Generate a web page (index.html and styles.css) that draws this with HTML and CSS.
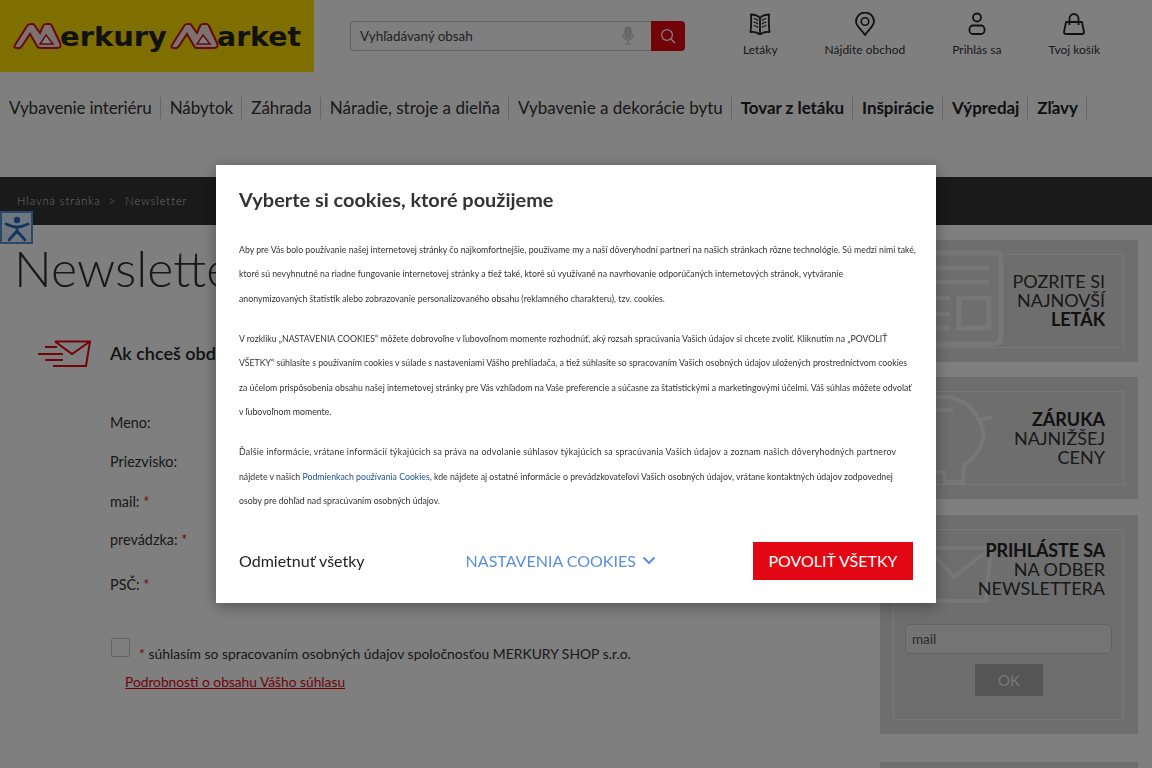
FILE: index.html
```html
<!DOCTYPE html>
<html lang="sk">
<head>
<meta charset="utf-8">
<title>Newsletter - Merkury Market</title>
<link rel="stylesheet" href="styles.css">
</head>
<body>
<div class="page">
  <header class="header">
    <a class="logo" href="#">
      <svg width="314" height="72" viewBox="0 0 314 72">
        <defs>
          <g id="emm">
            <path d="M2 22 L14 3 Q15 1 18 1 H20 Q21 1 22 3 L27 10 L30 3 Q31 1 33 1 H37 Q38 1 39 3 L47 20 Q49 25 44 25 H27 Q25 25 24 23 L17 11 L9 23 Q7 26 4 25 Q0 25 2 22 Z" fill="#fbe3e3" stroke="#c8161d" stroke-width="2"/>
            <path d="M33 12 L40 21 H27 Z" fill="#fff" stroke="#c8161d" stroke-width="1.500"/>
          </g>
        </defs>
        <use href="#emm" x="13" y="23"/>
        <text class="logo-word" x="60" y="46" textLength="107" lengthAdjust="spacingAndGlyphs">erkury</text>
        <use href="#emm" x="170" y="23"/>
        <text class="logo-word" x="217" y="46" textLength="84" lengthAdjust="spacingAndGlyphs">arket</text>
      </svg>
    </a>
    <form class="search">
      <div class="search-field">
        <span class="search-text">Vyhľadávaný obsah</span>
        <svg class="mic" width="12" height="20" viewBox="0 0 12 20"><rect x="3" y="1" width="6" height="11" rx="3" fill="#d4d4d4" stroke="#bbb"/><path d="M1 8v1a5 5 0 0 0 10 0V8M6 14v3M3 18h6" fill="none" stroke="#c4c4c4" stroke-width="1.200"/></svg>
      </div>
      <button class="search-btn" type="button" aria-label="Hľadať">
        <svg width="16" height="16" viewBox="0 0 16 16"><circle cx="7" cy="7" r="5.400" fill="none" stroke="#fff" stroke-width="1.300"/><path d="M11 11l4 4" stroke="#fff" stroke-width="1.400"/></svg>
      </button>
    </form>
    <nav class="tools">
      <a class="tool" href="#">
        <svg width="24" height="24" viewBox="0 0 24 24" class="tool-icon"><path d="M12 6 Q9 2.500 3 2.500 Q3.500 12 2.500 20 Q8 19.500 11 22 H13 Q16 19.500 21.500 20 Q20.500 12 21 2.500 Q15 2.500 12 6 Z M12 6 V22" fill="none" stroke="#222" stroke-width="1.800" stroke-linejoin="round"/><path d="M5.500 6.500 Q8 6.500 10 8.500M5.500 10 Q8 10 10 12M5.500 13.500 Q8 13.500 10 15.500M14 8.500 Q16 6.500 18.500 6.500M14 12 Q16 10 18.500 10M14 15.500 Q16 13.500 18.500 13.500" fill="none" stroke="#222" stroke-width="1.200"/></svg>
        <span>Letáky</span>
      </a>
      <a class="tool" href="#">
        <svg width="24" height="24" viewBox="0 0 24 24" class="tool-icon"><path d="M12 23 C8 17 3 14 3 9.500 A9 9 0 0 1 21 9.500 C21 14 16 17 12 23 Z" fill="none" stroke="#222" stroke-width="1.800"/><circle cx="12" cy="9.500" r="3.800" fill="none" stroke="#222" stroke-width="1.600"/></svg>
        <span>Nájdite obchod</span>
      </a>
      <a class="tool" href="#">
        <svg width="24" height="24" viewBox="0 0 24 24" class="tool-icon"><circle cx="12" cy="5.500" r="4" fill="none" stroke="#222" stroke-width="1.800"/><rect x="4.500" y="13.500" width="15" height="8.500" rx="3.500" fill="none" stroke="#222" stroke-width="1.800"/></svg>
        <span>Prihlás sa</span>
      </a>
      <a class="tool" href="#">
        <svg width="24" height="24" viewBox="0 0 24 24" class="tool-icon"><path d="M4 10 H20 L22 20 Q22 22 20 22 H4 Q2 22 2 20 Z" fill="none" stroke="#222" stroke-width="1.800" stroke-linejoin="round"/><path d="M7.500 13 V6.500 A4.500 4.500 0 0 1 16.500 6.500 V13" fill="none" stroke="#222" stroke-width="1.800"/></svg>
        <span>Tvoj košík</span>
      </a>
    </nav>
  </header>

  <nav class="menu">
    <a href="#">Vybavenie interiéru</a>
    <a href="#">Nábytok</a>
    <a href="#">Záhrada</a>
    <a href="#">Náradie, stroje a dielňa</a>
    <a href="#">Vybavenie a dekorácie bytu</a>
    <a class="strong" href="#">Tovar z letáku</a>
    <a class="strong" href="#">Inšpirácie</a>
    <a class="strong" href="#">Výpredaj</a>
    <a class="strong" href="#">Zľavy</a>
  </nav>

  <div class="crumbs">
    <a href="#">Hlavná stránka</a>
    <span class="crumb-sep">&gt;</span>
    <a href="#">Newsletter</a>
  </div>

  <main class="content">
    <section class="primary">
      <h1 class="title">Newsletter</h1>
      <div class="intro">
        <svg width="54" height="28" viewBox="0 0 54 28"><path d="M17 1.500 H52 L48 26 H15 M17 1.500 L34 14 L52 1.500" fill="none" stroke="#e30613" stroke-width="2"/><path d="M7 7 H19M0 14 H25M7 20 H25" stroke="#e30613" stroke-width="2"/></svg>
        <strong>Ak chceš obdržať novinky</strong>
      </div>
      <form class="form">
        <div class="row r1">Meno:</div>
        <div class="row r2">Priezvisko:</div>
        <div class="row r3">mail: <span class="req">*</span></div>
        <div class="row r4">prevádzka: <span class="req">*</span></div>
        <div class="row r5">PSČ: <span class="req">*</span></div>
        <div class="consent">
          <span class="check"></span>
          <span><span class="req">*</span> súhlasím so spracovaním osobných údajov spoločnosťou MERKURY SHOP s.r.o.</span>
        </div>
        <a class="details" href="#">Podrobnosti o obsahu Vášho súhlasu</a>
      </form>
    </section>

    <aside class="side">
      <div class="promo promo-a">
        <div class="promo-in">
          <svg class="mark" width="90" height="100" viewBox="0 0 90 100"><g fill="none" stroke="#eee" stroke-width="5"><path d="M0 3 H80 Q85 3 85 8 V87 Q85 94 78 94 H0"/><path d="M10 18 H73M10 32 H73M10 48 H34M10 64 H34M10 78 H34"/><rect x="43" y="48" width="30" height="30"/></g></svg>
          <p>POZRITE SI<br>NAJNOVŠÍ<br><b>LETÁK</b></p>
        </div>
      </div>
      <div class="promo promo-b">
        <div class="promo-in">
          <svg class="mark" width="90" height="100" viewBox="0 0 90 100"><g fill="none" stroke="#eee" stroke-width="4"><path d="M10 6 Q40 0 55 23 Q65 38 62 48 Q58 63 43 73 L42 90 H24 L23 80 H10"/><path d="M58 28 L71 25M10 18 H32"/></g></svg>
          <p><b>ZÁRUKA</b><br>NAJNIŽŠEJ<br>CENY</p>
        </div>
      </div>
      <div class="promo promo-c">
        <div class="promo-in">
          <svg class="mark" width="100" height="70" viewBox="0 0 100 70"><g fill="none" stroke="#eee" stroke-width="4"><path d="M0 4 H66 L61 57 H0"/><path d="M9 11 L29 33 L61 8"/></g></svg>
          <p><b>PRIHLÁSTE SA</b><br>NA ODBER<br>NEWSLETTERA</p>
          <div class="promo-field">mail</div>
          <button class="promo-ok" type="button">OK</button>
        </div>
      </div>
      <div class="promo promo-d"></div>
    </aside>
  </main>
</div>

<a class="access" href="#" aria-label="Prístupnosť">
  <svg width="28" height="28" viewBox="0 0 28 28"><circle cx="14" cy="6" r="3.200" fill="#2a6ac0"/><path d="M3 10 Q9 13 14 13 Q19 13 25 10 M14 13 V17 M14 17 L6 26 M14 17 L22 26" fill="none" stroke="#2a6ac0" stroke-width="2.800" stroke-linecap="round"/></svg>
</a>

<div class="overlay"></div>

<section class="modal">
  <h2>Vyberte si cookies, ktoré použijeme</h2>
  <div class="modal-body">
    <p>Aby pre Vás bolo používanie našej internetovej stránky čo najkomfortnejšie, používame my a naší dôveryhodní partneri na našich stránkach rôzne technológie. Sú medzi nimi také,<br>ktoré sú nevyhnutné na riadne fungovanie internetovej stránky a tiež také, ktoré sú využívané na navrhovanie odporúčaných internetových stránok, vytváranie<br>anonymizovaných štatistík alebo zobrazovanie personalizovaného obsahu (reklamného charakteru), tzv. cookies.</p>
    <p>V rozkliku „NASTAVENIA COOKIES“ môžete dobrovoľne v ľubovoľnom momente rozhodnúť, aký rozsah spracúvania Vašich údajov si chcete zvoliť. Kliknutím na „POVOLIŤ<br>VŠETKY“ súhlasíte s používaním cookies v súlade s nastaveniami Vášho prehliadača, a tiež súhlasíte so spracovaním Vašich osobných údajov uložených prostredníctvom cookies<br>za účelom prispôsobenia obsahu našej internetovej stránky pre Vás vzhľadom na Vaše preferencie a súčasne za štatistickými a marketingovými účelmi. Váš súhlas môžete odvolať<br>v ľubovoľnom momente.</p>
    <p><span class="loose">Ďalšie informácie, vrátane informácií týkajúcich sa práva na odvolanie súhlasov týkajúcich sa spracúvania Vašich údajov a zoznam našich dôveryhodných partnerov</span><br>nájdete v našich <a href="#">Podmienkach používania Cookies</a>, kde nájdete aj ostatné informácie o prevádzkovateľovi Vašich osobných údajov, vrátane kontaktných údajov zodpovednej<br>osoby pre dohľad nad spracúvaním osobných údajov.</p>
  </div>
  <div class="modal-actions">
    <button class="btn-decline" type="button">Odmietnuť všetky</button>
    <button class="btn-settings" type="button">NASTAVENIA COOKIES
      <svg width="14" height="9" viewBox="0 0 14 9"><path d="M1.500 1.500 L7 7 L12.500 1.500" fill="none" stroke="#5b8fd9" stroke-width="2"/></svg>
    </button>
    <button class="btn-allow" type="button">POVOLIŤ VŠETKY</button>
  </div>
</section>
</body>
</html>
```

FILE: styles.css
```css
* { box-sizing: border-box; }
html, body { margin: 0; padding: 0; }
body {
  width: 1152px;
  height: 768px;
  overflow: hidden;
  background: #fff;
  color: #222;
  font-family: Lato, "Noto Sans", sans-serif;
  font-size: 15px;
}
a { color: inherit; text-decoration: none; }
button { font-family: inherit; border: 0; padding: 0; background: none; }
p { margin: 0; }

.page { height: 768px; overflow: hidden; }

.header { display: flex; height: 72px; }
.logo { display: block; width: 314px; height: 72px; background: #ffdd00; flex: none; }
.logo svg { display: block; }
.logo-word { font-family: "DejaVu Sans", sans-serif; font-weight: 700; font-size: 27px; fill: #222; }

.search { display: flex; margin: 21px 0 0 36px; height: 30px; width: 335px; flex: none; }
.search-field {
  flex: 1;
  display: flex;
  align-items: center;
  justify-content: space-between;
  padding: 0 17px 0 9px;
  border: 1px solid #c4c4c4;
  border-right: 0;
  border-radius: 4px 0 0 4px;
  background: #fff;
  font-size: 13.400px;
  color: #444;
}
.search-btn {
  width: 34px;
  display: flex;
  align-items: center;
  justify-content: center;
  background: #e30613;
  border-radius: 0 4px 4px 0;
}

.tools { display: flex; gap: 47px; margin: 12px 0 0 58px; align-items: flex-start; }
.tool { display: flex; flex-direction: column; align-items: center; font-size: 12px; color: #333; line-height: 15px; }
.tool-icon { display: block; margin-bottom: 6px; }

.menu { display: flex; height: 105px; padding: 25px 0 0 0; align-items: flex-start; font-size: 17px; line-height: 22px; color: #333; }
.menu a { padding: 0 8px 0 9px; border-right: 1px solid #ccc; height: 22px; }
.menu a:first-child { letter-spacing: -.15px; }
.menu .strong { font-weight: 700; color: #222; letter-spacing: -.05px; }

.crumbs {
  display: flex;
  align-items: center;
  gap: 8px;
  height: 48px;
  padding: 0 0 2px 17px;
  background: #343434;
  color: #d8d8d8;
  font-size: 11px;
  font-weight: 300;
  letter-spacing: 1px;
}
.crumb-sep { margin-right: 1px; }

.content { display: flex; justify-content: space-between; padding-right: 14px; height: 543px; }
.primary { flex: 1; }
.title { margin: 13px 0 0 14px; font-size: 50px; line-height: 60px; font-weight: 300; color: #333; }
.intro { display: flex; align-items: center; gap: 18px; margin: 40px 0 0 38px; height: 32px; font-size: 18px; }
.intro strong { font-weight: 600; color: #222; padding-bottom: 2px; }

.form { margin: 43px 0 0 110px; font-size: 14.400px; color: #333; }
.row { line-height: 20px; }
.r2 { margin-top: 19px; }
.r3 { margin-top: 20px; }
.r4 { margin-top: 18px; }
.r5 { margin-top: 25px; }
.req { color: #e30613; }

.consent { display: flex; align-items: center; gap: 9px; margin-top: 48px; margin-left: 1px; height: 20px; font-size: 13.900px; }
.check { width: 19px; height: 19px; border: 1px solid #c8c8c8; border-radius: 2px; background: #fff; position: relative; top: -6px; }
.details { display: inline-block; margin: 9px 0 0 15px; line-height: 20px; font-size: 13.750px; color: #e30613; text-decoration: underline; }

.side { width: 258px; padding-top: 15px; flex: none; }
.promo { background: #dcdcdc; padding: 14px 14px 14px 13px; margin-bottom: 15px; }
.promo-a, .promo-b { height: 122px; }
.promo-c { height: 219px; margin-top: 16px; margin-bottom: 28px; }
.promo-d { height: 60px; }
.promo-in {
  position: relative;
  height: 100%;
  border: 1px solid #f0f0f0;
  padding: 18px 18px 0 0;
  text-align: right;
}
.promo-a .promo-in { padding-top: 17px; }
.promo-c .promo-in { padding-top: 11px; }
.promo-in p { position: relative; font-size: 18px; line-height: 19px; color: #333; }
.promo-in p b { color: #222; }
.promo-c p b { letter-spacing: -.15px; }
.mark { position: absolute; }
.promo-a .mark { left: 22px; top: -5px; }
.promo-b .mark { left: 27px; top: 0; }
.promo-c .mark { left: 31px; top: 14px; }
.promo-field {
  position: relative;
  margin: 26px -7px 0 11px;
  height: 30px;
  padding-left: 6px;
  border: 1px solid #c4c4c4;
  border-radius: 5px;
  background: #e8e8e8;
  text-align: left;
  line-height: 28px;
  font-size: 13.500px;
  color: #555;
}
.promo-ok {
  display: block;
  position: relative;
  width: 68px;
  height: 32px;
  margin: 10px 0 0 81px;
  background: #aaa;
  color: #eee;
  font-size: 15px;
}

.access {
  position: absolute;
  left: 0;
  top: 211px;
  width: 33px;
  height: 33px;
  display: flex;
  align-items: center;
  justify-content: center;
  background: #dceeff;
  border: 2px solid #5a8fd0;
}

.overlay { position: fixed; inset: 0; background: rgba(0, 0, 0, .5); }

.modal {
  position: fixed;
  left: 216px;
  top: 165px;
  width: 720px;
  height: 438px;
  padding: 22px 23px 0;
  background: #fff;
  box-shadow: 0 3px 14px rgba(0, 0, 0, .35);
  color: #222;
}
.modal h2 { margin: 0; font-size: 19.900px; line-height: 25px; font-weight: 700; color: #333; }
.modal-body { margin-top: 25.500px; font-size: 8.740px; line-height: 24.500px; color: #333; white-space: nowrap; }
.modal-body p { margin-bottom: 15.500px; }
.modal-body a { color: #1d4f91; }
.loose { letter-spacing: .25px; }
.modal-actions { position: absolute; left: 23px; right: 23px; bottom: 23px; display: flex; align-items: center; height: 38px; }
.modal-actions button { padding-bottom: 2px; }
.btn-decline { font-size: 16px; color: #222; }
.btn-settings { margin-left: 101px; font-size: 16px; color: #5b8fd9; display: flex; align-items: center; gap: 6px; }
.btn-allow { margin-left: auto; width: 160px; height: 38px; background: #e30613; color: #fff; font-size: 16px; }
```
